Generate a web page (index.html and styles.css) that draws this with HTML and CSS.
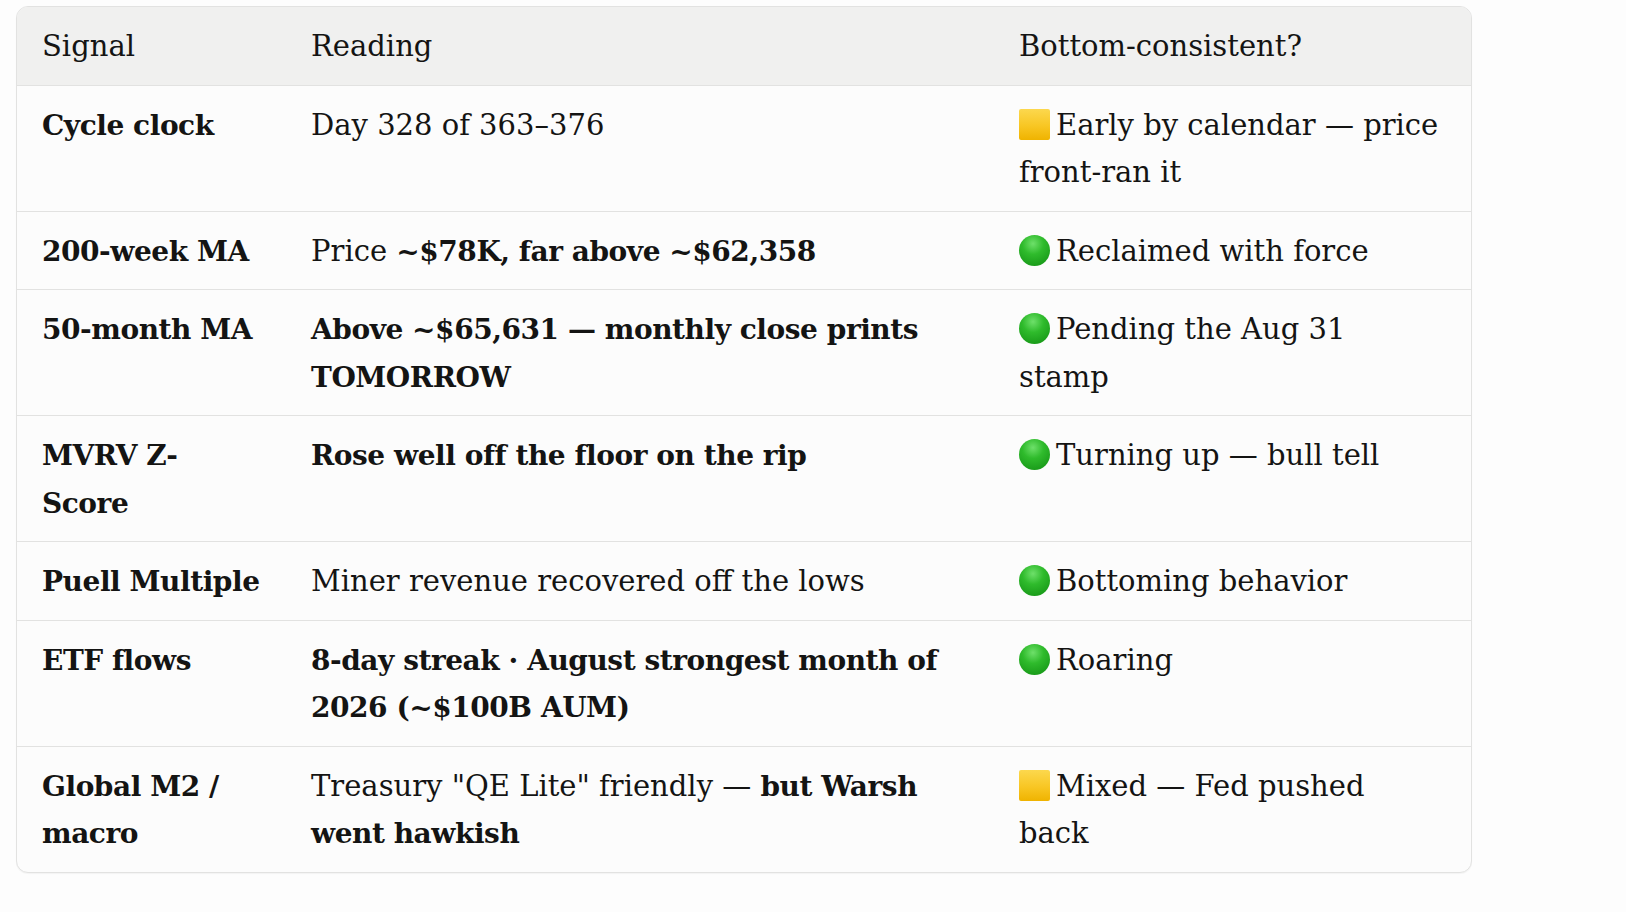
FILE: index.html
```html
<!DOCTYPE html>
<html lang="en">
<head>
<meta charset="utf-8">
<title>Bottom signals</title>
<link rel="stylesheet" href="styles.css">
</head>
<body>
<div class="page">
  <div class="table-frame">
    <table class="signals">
      <colgroup>
        <col class="c-signal">
        <col class="c-reading">
        <col class="c-verdict">
      </colgroup>
      <thead>
        <tr><th>Signal</th><th>Reading</th><th>Bottom-consistent?</th></tr>
      </thead>
      <tbody>
        <tr>
          <td><strong>Cycle clock</strong></td>
          <td>Day 328 of 363–376</td>
          <td><span class="mark sq" role="img" aria-label="yellow square"></span>Early by calendar — price front-ran it</td>
        </tr>
        <tr>
          <td><strong>200-week MA</strong></td>
          <td>Price <strong>~$78K, far above ~$62,358</strong></td>
          <td><span class="mark dot" role="img" aria-label="green circle"></span>Reclaimed with force</td>
        </tr>
        <tr>
          <td><strong>50-month MA</strong></td>
          <td><strong>Above ~$65,631 — monthly close prints TOMORROW</strong></td>
          <td><span class="mark dot" role="img" aria-label="green circle"></span>Pending the Aug 31 stamp</td>
        </tr>
        <tr>
          <td><strong>MVRV Z-<br>Score</strong></td>
          <td><strong>Rose well off the floor on the rip</strong></td>
          <td><span class="mark dot" role="img" aria-label="green circle"></span>Turning up — bull tell</td>
        </tr>
        <tr>
          <td><strong>Puell Multiple</strong></td>
          <td>Miner revenue recovered off the lows</td>
          <td><span class="mark dot" role="img" aria-label="green circle"></span>Bottoming behavior</td>
        </tr>
        <tr>
          <td><strong>ETF flows</strong></td>
          <td><strong>8-day streak · August strongest month of 2026 (~$100B AUM)</strong></td>
          <td><span class="mark dot" role="img" aria-label="green circle"></span>Roaring</td>
        </tr>
        <tr>
          <td><strong>Global M2 / macro</strong></td>
          <td>Treasury "QE Lite" friendly — <strong>but Warsh</strong> <strong>went hawkish</strong></td>
          <td><span class="mark sq" role="img" aria-label="yellow square"></span>Mixed — Fed pushed back</td>
        </tr>
      </tbody>
    </table>
  </div>
</div>
</body>
</html>
```
FILE: styles.css
```css
html, body {
  margin: 0;
  padding: 0;
  background: #fdfdfd;
}

.page {
  padding: 6px 16px 20px 16px;
  font-family: "DejaVu Serif", "Liberation Serif", serif;
  color: #141413;
}

.table-frame {
  width: 1454px;
  border: 1px solid #e2e2e1;
  border-radius: 12px;
  overflow: hidden;
  background: #fcfcfc;
  box-shadow: 0 1px 1px rgba(0, 0, 0, 0.04);
}

.signals {
  width: 100%;
  border-collapse: collapse;
  table-layout: fixed;
  font-size: 29px;
  line-height: 47.5px;
}

.c-signal { width: 269px; }
.c-reading { width: 708px; }
.c-verdict { width: auto; }

.signals th,
.signals td {
  padding: 16px 18px 14px 25px;
  text-align: left;
  vertical-align: top;
  border-bottom: 1px solid #e2e2e1;
}

.signals td:last-child,
.signals th:last-child {
  padding-right: 29px;
}

.signals th {
  font-weight: 400;
  background: #f0f0ef;
}

.signals tbody tr:last-child td {
  border-bottom: none;
}

.signals strong {
  font-weight: 700;
  font-size: 28px;
  letter-spacing: -0.45px;
}

.mark {
  display: inline-block;
  width: 31px;
  height: 31px;
  margin-right: 6px;
  vertical-align: -5px;
}

.mark.sq {
  border-radius: 2px;
  background: linear-gradient(180deg, #fcd84e 0%, #f8c623 55%, #efb300 100%);
}

.mark.dot {
  border-radius: 50%;
  background: radial-gradient(circle at 45% 28%, #6ee06a 0%, #2fbb2c 38%, #1a9c1a 80%, #13861a 100%);
}
```
